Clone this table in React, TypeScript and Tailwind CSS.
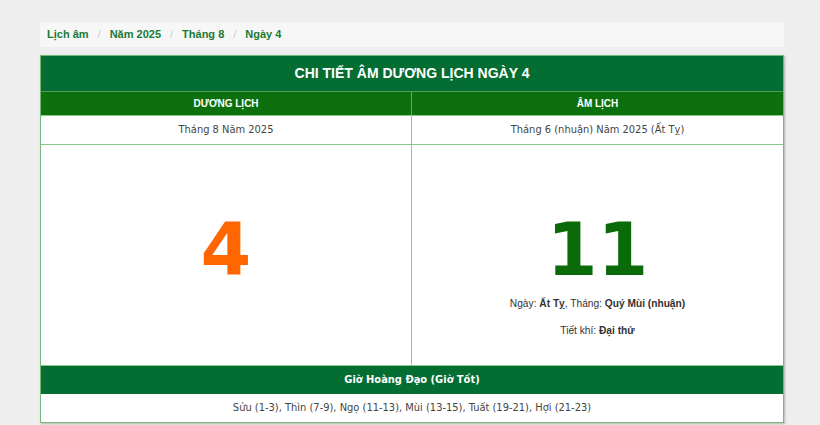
import React from "react";

const tahoma = { fontFamily: '"DejaVu Sans Condensed", "DejaVu Sans", sans-serif' };
const verdana = { fontFamily: '"DejaVu Sans", sans-serif' };

export default function App() {
  const crumbs = ["Lịch âm", "Năm 2025", "Tháng 8", "Ngày 4"];
  return (
    <div className="min-h-[425px] w-[820px] bg-[#eeeeee] pt-[22px] font-['Liberation_Sans',Arial,sans-serif]">
      <div className="ml-[40px] w-[744px]">
        <div className="flex h-[25px] items-center bg-[#f7f7f7] pl-[7px] text-[11px] font-bold text-[#1b7a35]">
          {crumbs.map((c, i) => (
            <React.Fragment key={c}>
              {i > 0 && <span className="px-[9px] font-normal text-[#cccccc]">/</span>}
              <span>{c}</span>
            </React.Fragment>
          ))}
        </div>
        <div className="mt-[8px] border border-[#77b777] bg-white shadow-[1px_1px_2px_rgba(0,0,0,0.25)]">
          <div className="flex h-[35px] items-center justify-center bg-[#036d32] text-[14px] font-bold text-white">
            CHI TIẾT ÂM DƯƠNG LỊCH NGÀY 4
          </div>
          <div className="flex h-[24px] border-t border-[#5a9a5a] bg-[#0c700e] text-[10px] font-bold text-white">
            <div className="flex w-[371px] items-center justify-center border-r border-[#6aa86a]">DƯƠNG LỊCH</div>
            <div className="flex flex-1 items-center justify-center">ÂM LỊCH</div>
          </div>
          <div className="flex h-[29px] border-t border-[#8cc88c] text-[11px] text-[#444444]" style={tahoma}>
            <div className="flex w-[371px] items-center justify-center border-r border-[#8cc88c]">Tháng 8 Năm 2025</div>
            <div className="flex flex-1 items-center justify-center">Tháng 6 (nhuận) Năm 2025 (Ất Tỵ)</div>
          </div>
          <div className="flex h-[221px] border-t border-[#8cc88c]">
            <div
              className="flex w-[371px] items-center justify-center border-r border-[#8cc88c] pb-[12px] text-[73px] font-bold leading-none text-[#ff6600]"
              style={verdana}
            >
              4
            </div>
            <div className="flex flex-1 flex-col items-center pt-[68px]">
              <div className="text-[73px] font-bold leading-none text-[#0b6b0b]" style={verdana}>
                11
              </div>
              <div className="mt-[10px] text-[10.2px] text-[#333333]">
                Ngày: <b>Ất Tỵ</b>, Tháng: <b>Quý Mùi (nhuận)</b>
              </div>
              <div className="mt-[12px] text-[10.2px] text-[#333333]">
                Tiết khí: <b>Đại thử</b>
              </div>
            </div>
          </div>
          <div
            className="flex h-[29px] items-center justify-center border-t border-[#8cc88c] bg-[#036d32] text-[11px] font-bold text-white"
            style={tahoma}
          >
            Giờ Hoàng Đạo (Giờ Tốt)
          </div>
          <div className="flex h-[28px] items-center justify-center text-[11px] text-[#444444]" style={tahoma}>
            Sửu (1-3), Thìn (7-9), Ngọ (11-13), Mùi (13-15), Tuất (19-21), Hợi (21-23)
          </div>
        </div>
      </div>
    </div>
  );
}
